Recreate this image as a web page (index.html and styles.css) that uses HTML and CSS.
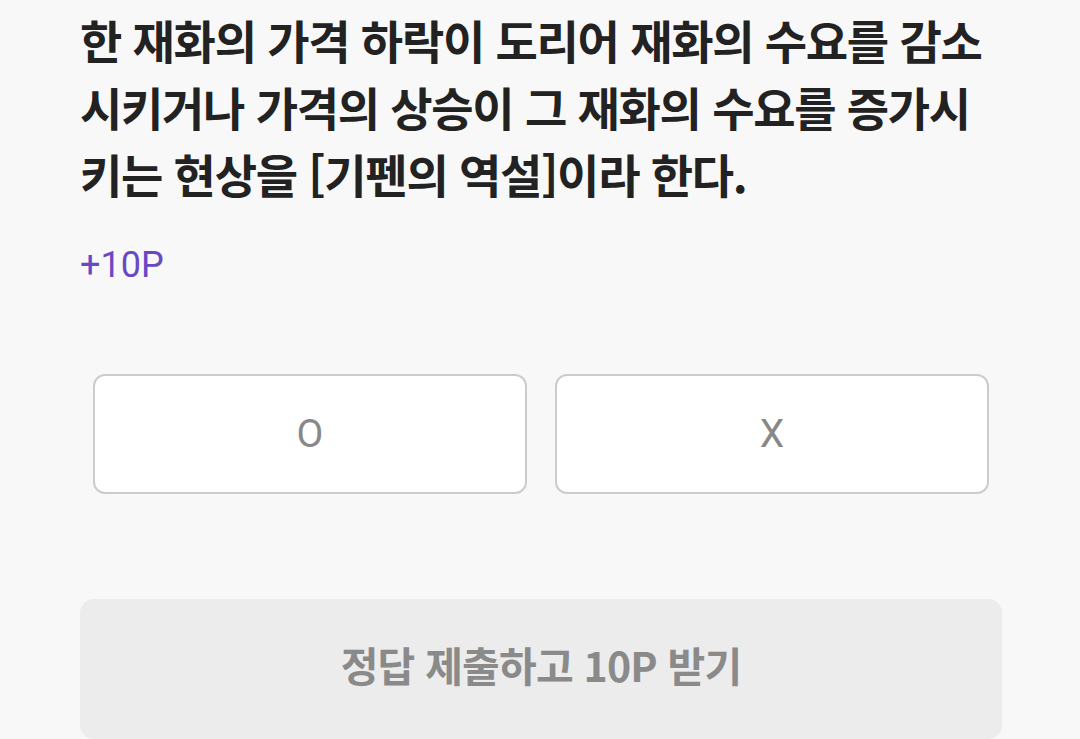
FILE: index.html
```html
<!DOCTYPE html>
<html lang="ko">
<head>
    <meta charset="UTF-8">
    <meta name="viewport" content="width=device-width, initial-scale=1.0">
    <title>OX 퀴즈</title>
    <link rel="stylesheet" href="styles.css">
</head>
<body>
    <main class="quiz">
        <p class="question">한 재화의 가격 하락이 도리어 재화의 수요를 감소시키거나 가격의 상승이 그 재화의 수요를 증가시키는 현상을 [기펜의 역설]이라 한다.</p>
        <div class="point">+10P</div>
        <div class="choices">
            <button type="button" class="choice">O</button>
            <button type="button" class="choice">X</button>
        </div>
        <button type="button" class="submit" disabled>정답 제출하고 10P 받기</button>
    </main>
</body>
</html>
```

FILE: styles.css
```css
body {
    margin: 0;
    background-color: #f8f8f8;
    font-family: "Noto Sans CJK KR", "Noto Sans", sans-serif;
    color: #222222;
}
.quiz {
    display: flex;
    flex-direction: column;
    padding: 6px 78px 0 80px;
}
.question {
    margin: 0;
    font-size: 46px;
    font-weight: bold;
    line-height: 67px;
    letter-spacing: -1.3px;
}
.point {
    margin-top: 33px;
    font-family: Roboto, "Noto Sans", sans-serif;
    font-size: 36px;
    line-height: 50px;
    color: #6a48c4;
}
.choices {
    display: flex;
    gap: 28px;
    margin: 84px 13px 0 13px;
}
.choice {
    flex: 1;
    height: 120px;
    background-color: #ffffff;
    border: 2px solid #cccccc;
    border-radius: 12px;
    font-family: Roboto, "Noto Sans", sans-serif;
    font-size: 39px;
    color: #888888;
}
.submit {
    margin-top: 105px;
    height: 140px;
    border: none;
    border-radius: 14px;
    background-color: #ececec;
    font-family: "Noto Sans CJK KR", sans-serif;
    font-size: 41px;
    font-weight: bold;
    color: #8a8a8a;
    letter-spacing: -0.8px;
    padding-bottom: 12px;
}
```
